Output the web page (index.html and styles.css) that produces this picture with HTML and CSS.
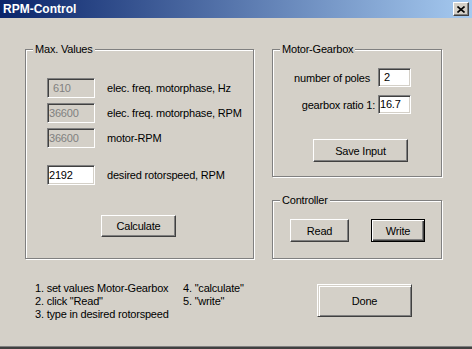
FILE: index.html
```html
<!DOCTYPE html>
<html>
<head>
    <title>RPM-Control</title>
    <link rel="stylesheet" href="styles.css">
</head>
<body>
<div class="window">
    <div class="titlebar">
        <span class="title">RPM-Control</span>
        <span class="close">
            <svg width="8" height="7" viewBox="0 0 8 7">
                <path d="M0.5 0.5 L7.5 6.5 M7.5 0.5 L0.5 6.5" stroke="#000" stroke-width="1.6" fill="none"/>
            </svg>
        </span>
    </div>
    <div class="client">
        <div class="top-row">
            <div class="group group-max">
                <span class="group-title">Max. Values</span>
                <div class="field field-first">
                    <span class="edit edit-disabled edit-indent">610</span>
                    <span>elec. freq. motorphase, Hz</span>
                </div>
                <div class="field">
                    <span class="edit edit-disabled">36600</span>
                    <span>elec. freq. motorphase, RPM</span>
                </div>
                <div class="field">
                    <span class="edit edit-disabled">36600</span>
                    <span>motor-RPM</span>
                </div>
                <div class="field field-desired">
                    <span class="edit">2192</span>
                    <span>desired rotorspeed, RPM</span>
                </div>
                <button class="btn btn-calc">Calculate</button>
            </div>
            <div class="right-col">
                <div class="group group-motor">
                    <span class="group-title">Motor-Gearbox</span>
                    <div class="gear-row gear-first">
                        <span class="gear-label">number of poles</span>
                        <span class="edit edit-small edit-indent">2</span>
                    </div>
                    <div class="gear-row">
                        <span class="gear-label gear-label-tight">gearbox ratio 1:</span>
                        <span class="edit edit-small">16.7</span>
                    </div>
                    <button class="btn btn-save">Save Input</button>
                </div>
                <div class="group group-ctrl">
                    <span class="group-title">Controller</span>
                    <div class="ctrl-buttons">
                        <button class="btn btn-read">Read</button>
                        <button class="btn btn-write">Write</button>
                    </div>
                </div>
            </div>
        </div>
        <div class="bottom-row">
            <div class="steps">
                <div class="steps-col steps-col-first">
                    <span>1. set values Motor-Gearbox</span>
                    <span>2. click "Read"</span>
                    <span>3. type in desired rotorspeed</span>
                </div>
                <div class="steps-col">
                    <span>4. "calculate"</span>
                    <span>5. "write"</span>
                </div>
            </div>
            <button class="btn btn-done">Done</button>
        </div>
    </div>
</div>
</body>
</html>
```

FILE: styles.css
```css
* {
    margin: 0;
    padding: 0;
}

body {
    font-family: "Liberation Sans", Arial, sans-serif;
    font-size: 11px;
    letter-spacing: -0.2px;
    color: #000;
}

.window {
    width: 472px;
    height: 349px;
    box-sizing: border-box;
    background: #d4d0c8;
    border-bottom: 2px solid #404040;
    display: flex;
    flex-direction: column;
}

/* title bar */
.titlebar {
    height: 18px;
    flex: none;
    display: flex;
    align-items: center;
    justify-content: space-between;
    padding: 0 3px 0 3px;
    background: linear-gradient(to right, #0a246a, #a6caf0);
}

.title {
    color: #fff;
    font-weight: bold;
    font-size: 12px;
    letter-spacing: 0;
    line-height: 18px;
}

.close {
    width: 16px;
    height: 14px;
    box-sizing: border-box;
    background: #d4d0c8;
    border: 1px solid;
    border-color: #fff #404040 #404040 #fff;
    box-shadow: inset -1px -1px #808080;
    display: flex;
    align-items: center;
    justify-content: center;
}

.close svg {
    display: block;
}

/* client area */
.client {
    flex: 1;
    border-bottom: 1px solid #808080;
    padding: 31px 0 0 25px;
}

.top-row {
    display: flex;
    align-items: flex-start;
    gap: 18px;
}

.group {
    box-sizing: border-box;
    border: 1px solid #808080;
    box-shadow: inset 1px 1px #fff, 1px 1px #fff;
    display: flex;
    flex-direction: column;
    align-items: flex-start;
}

.group-title {
    margin: -7px 0 0 7px;
    padding: 0 2px;
    background: #d4d0c8;
    line-height: 13px;
}

/* max values */
.group-max {
    width: 229px;
    height: 210px;
}

.field {
    display: flex;
    align-items: center;
    gap: 12px;
    margin: 5px 0 0 21px;
}

.field-first {
    margin-top: 22px;
}

.field-desired {
    margin-top: 17px;
}

.edit {
    box-sizing: border-box;
    width: 48px;
    height: 20px;
    padding-left: 1px;
    line-height: 18px;
    background: #fff;
    border: 1px solid;
    border-color: #808080 #fff #fff #808080;
    box-shadow: inset 1px 1px #404040, inset -1px -1px #d4d0c8;
}

.edit-disabled {
    background: #d4d0c8;
    color: #808080;
}

.edit-indent {
    padding-left: 5px;
}

.edit-small {
    width: 33px;
    height: 19px;
    line-height: 17px;
}

/* buttons */
.btn {
    font-family: "Liberation Sans", Arial, sans-serif;
    font-size: 11px;
    letter-spacing: -0.2px;
    color: #000;
    background: #d4d0c8;
    border: 1px solid;
    border-color: #fff #404040 #404040 #fff;
    box-shadow: inset -1px -1px #808080;
    height: 23px;
    box-sizing: border-box;
}

.btn-calc {
    width: 75px;
    height: 22px;
    margin: 30px 0 0 75px;
}

/* motor gearbox */
.right-col {
    display: flex;
    flex-direction: column;
    gap: 23px;
}

.group-motor {
    width: 170px;
    height: 128px;
}

.gear-row {
    align-self: stretch;
    display: flex;
    align-items: center;
    justify-content: flex-end;
    padding-right: 30px;
    margin-top: 8px;
}

.gear-first {
    margin-top: 12px;
}

.gear-label {
    margin-right: 8px;
}

.gear-label-tight {
    margin-right: 3px;
}

.btn-save {
    width: 95px;
    margin: 25px 0 0 40px;
}

/* controller */
.group-ctrl {
    width: 170px;
    height: 59px;
}

.ctrl-buttons {
    display: flex;
    gap: 22px;
    margin: 12px 0 0 17px;
}

.btn-read {
    width: 59px;
}

.btn-write {
    width: 54px;
    border-color: #000;
    box-shadow: inset 1px 1px #fff, inset -1px -1px #404040, inset -2px -2px #808080;
}

/* bottom */
.bottom-row {
    display: flex;
    align-items: flex-start;
    margin-top: 23px;
    padding-right: 60px;
}

.steps {
    display: flex;
    margin-left: 10px;
    line-height: 13px;
}

.steps-col {
    display: flex;
    flex-direction: column;
}

.steps-col-first {
    width: 148px;
}

.btn-done {
    width: 95px;
    height: 33px;
    margin: 2px 0 0 auto;
    box-shadow: inset 1px 1px #d4d0c8, inset 2px 2px #fff, inset -1px -1px #808080;
}
```
